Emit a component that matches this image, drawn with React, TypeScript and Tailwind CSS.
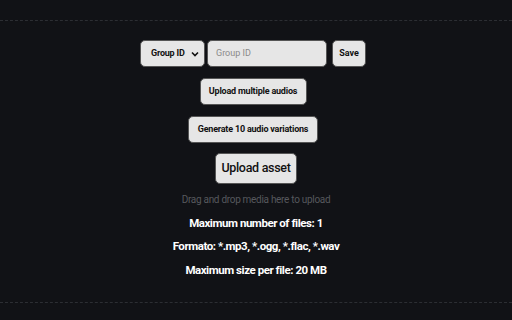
import React from "react";

export default function App() {
  const btn =
    "bg-[#e6e6e6] text-[#111] rounded-[5px] border border-[#555] font-bold";
  const info = "text-[11.5px] font-bold text-white tracking-[-0.45px]";
  return (
    <div
      className="w-[512px] h-[320px] bg-[#111216] pt-[20px] overflow-hidden"
      style={{ fontFamily: "Roboto, 'Open Sans', sans-serif" }}
    >
      <div className="h-[283px] border-y border-dashed border-[#2c2e33] flex flex-col items-center pt-[19px]">
        <div className="flex items-center ml-[-6px]">
          <div className={`${btn} w-[65px] h-[27px] flex items-center justify-between pl-[10px] pr-[5px] text-[9px] tracking-[-0.2px]`}>
            <span>Group ID</span>
            <svg width="8" height="6" viewBox="0 0 8 6">
              <path d="M1 1.5 L4 4.5 L7 1.5" stroke="#111" strokeWidth="1.6" fill="none" />
            </svg>
          </div>
          <div className="ml-[2px] w-[120px] h-[27px] bg-[#e6e6e6] rounded-[5px] border border-[#555] flex items-center pl-[8px] text-[9px] text-[#8a8a8a]">
            Group ID
          </div>
          <div className={`${btn} ml-[5px] w-[34px] h-[27px] flex items-center justify-center text-[9px]`}>
            Save
          </div>
        </div>
        <div className={`${btn} mt-[11px] ml-[-6px] w-[107px] h-[27px] flex items-center justify-center text-[9px] tracking-[-0.2px]`}>
          Upload multiple audios
        </div>
        <div className={`${btn} mt-[11px] ml-[-6px] w-[130px] h-[27px] flex items-center justify-center text-[9px] tracking-[-0.2px]`}>
          Generate 10 audio variations
        </div>
        <div className={`${btn} mt-[10px] w-[82px] h-[31px] flex items-center justify-center text-[12.5px] font-medium tracking-[-0.3px]`}>
          Upload asset
        </div>
        <div className="mt-[8px] text-[10px] text-[#56585d] tracking-[-0.3px]">Drag and drop media here to upload</div>
        <div className={`mt-[8px] ${info}`}>Maximum number of files: 1</div>
        <div className={`mt-[6px] ${info}`}>Formato: *.mp3, *.ogg, *.flac, *.wav</div>
        <div className={`mt-[6px] ${info}`}>Maximum size per file: 20 MB</div>
      </div>
    </div>
  );
}
